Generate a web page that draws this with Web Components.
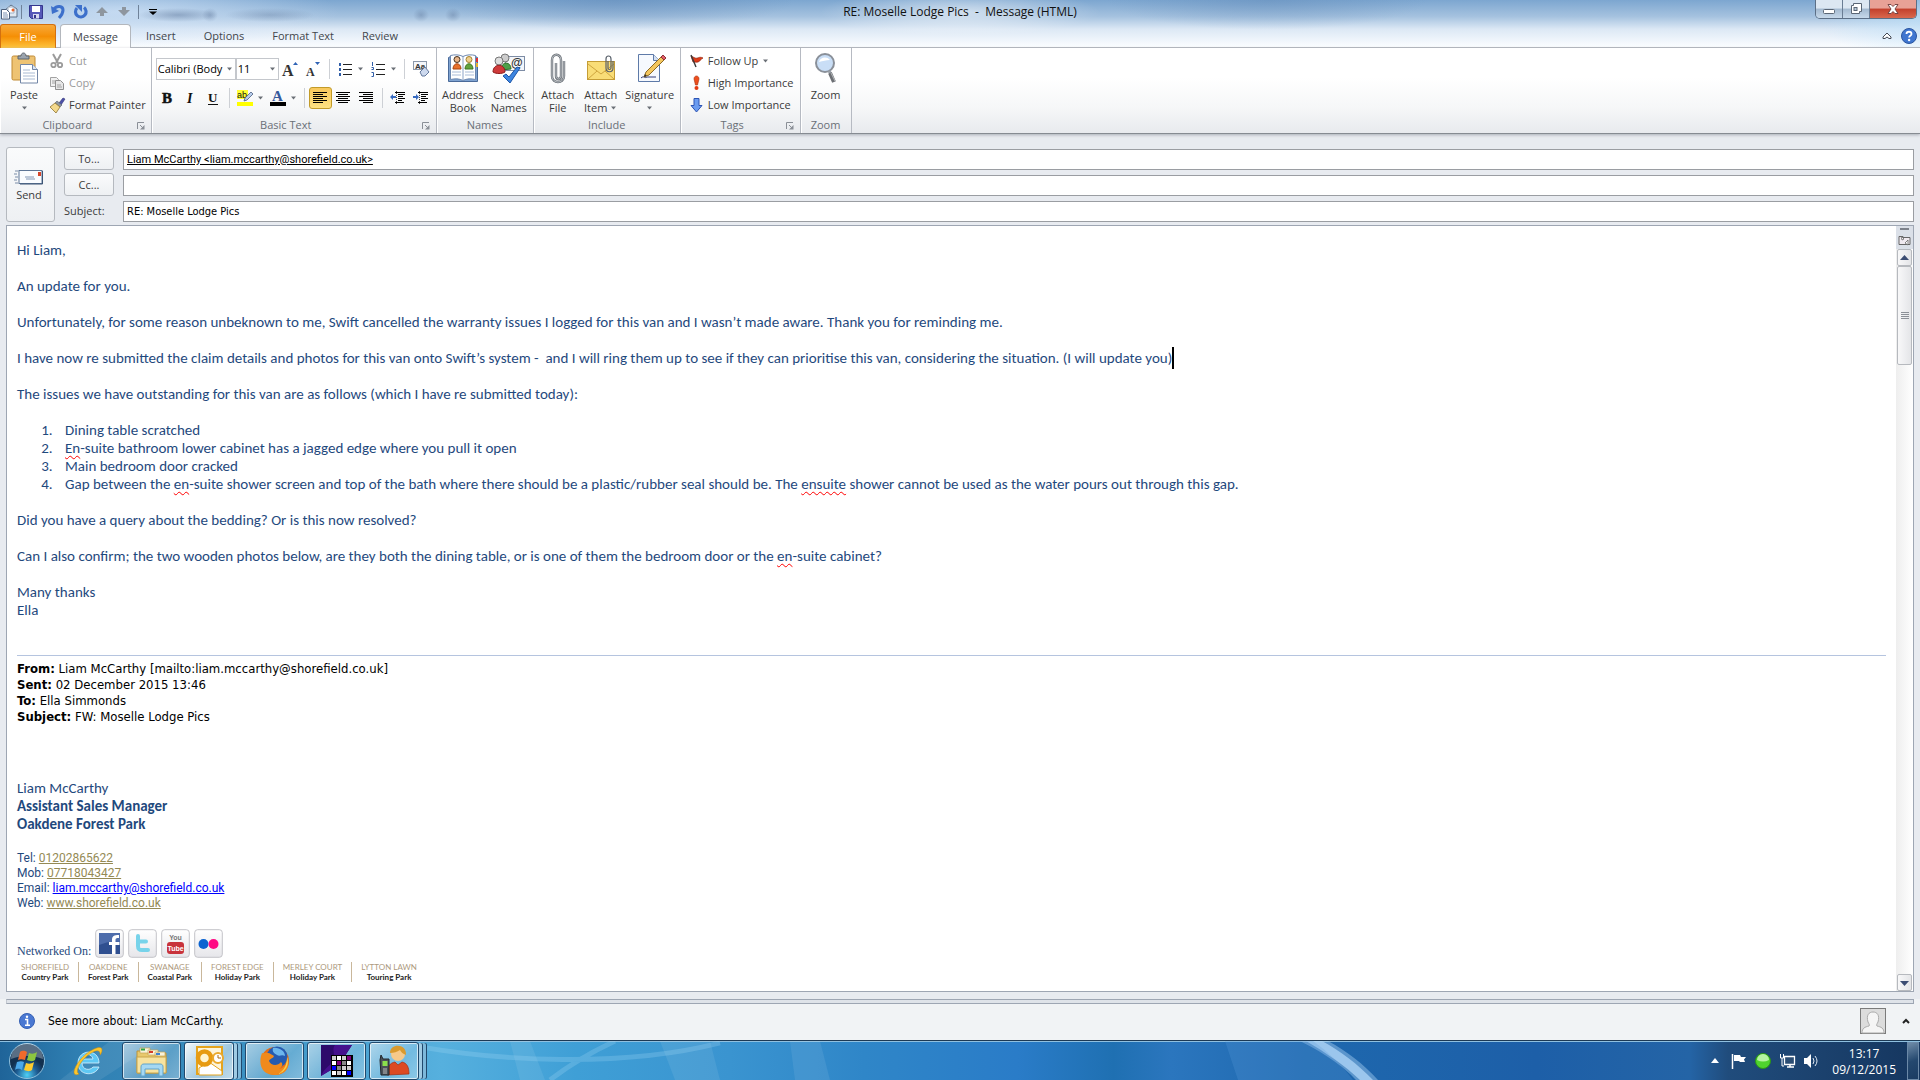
<!DOCTYPE html>
<html lang="en">
<head>
<meta charset="utf-8">
<title>RE: Moselle Lodge Pics - Message (HTML)</title>
<style>
    body {
        margin: 0;
        min-height: 100vh;
        display: flex;
        flex-direction: column;
        background: #e8ebf0;
        font: 11px/14px "Open Sans", "Noto Sans", sans-serif;
        color: #3b3b3b;
    }
    .ribbon {
        display: flex;
        height: 85px;
        border-bottom: 1px solid #868b92;
        background: linear-gradient(#fff 35%, #f6f7f8 70%, #e8eaee);
        box-shadow: 0 1px 3px #a9aeb6;
    }
    .stack { display: flex; flex-direction: column; }
    .line { display: flex; align-items: center; height: 29px; }
    message-editor { flex: 1; }

    /* message text */
    .mail { font: 15px/18px Carlito, Lato, sans-serif; color: #1f497d; }
    .mail p { margin: 0 0 18px; }
    .mail ol { margin: 0 0 18px; padding-left: 39px; }
    .mail li { padding-left: 9px; }
    .typo { text-decoration: underline wavy #f00 1px; text-underline-offset: 2px; }
    .caret { border-left: 2px solid #000; padding: 2px 0; }
    .quoted {
        margin-top: 36px;
        border-top: 1px solid #b5c4df;
        padding-top: 5px;
        font: 13px/16px "DejaVu Sans Condensed", sans-serif;
        color: #000;
    }
    .sign { margin-top: 54px; }
    .contact { margin-top: 18px; font: 12px/15px Roboto, sans-serif; }
    .contact a { color: #948a54; }
    .contact a.mailto { color: #00f; }
    .social { display: flex; align-items: flex-end; gap: 4px; margin-top: 18px; font: 12px/14px "Liberation Serif", serif; }
</style>
</head>
<body>

<window-header title="RE: Moselle Lodge Pics &nbsp;-&nbsp; Message (HTML)"></window-header>

<div class="ribbon">
    <ribbon-group label="Clipboard" launcher>
        <large-button icon="paste" text="Paste" arrow style="--w:44px"></large-button>
        <div class="stack">
            <small-button icon="cut" text="Cut" disabled></small-button>
            <small-button icon="copy" text="Copy" disabled></small-button>
            <small-button icon="brush" text="Format Painter"></small-button>
        </div>
    </ribbon-group>
    <ribbon-group label="Basic Text" launcher>
        <div class="stack" style="padding:4px 1px 0 2px">
            <div class="line">
                <combo-box label="Font" value="Calibri (Body" style="--w:80px"></combo-box>
                <combo-box label="Font size" value="11" style="--w:43px"></combo-box>
                <tool-button icon="grow" label="Grow font"></tool-button>
                <tool-button icon="shrink" label="Shrink font"></tool-button>
                <tool-separator></tool-separator>
                <tool-button icon="bullets" label="Bullets" arrow></tool-button>
                <tool-button icon="numbers" label="Numbering" arrow></tool-button>
                <tool-separator></tool-separator>
                <tool-button icon="clear" label="Clear formatting"></tool-button>
            </div>
            <div class="line">
                <tool-button icon="bold" label="Bold"></tool-button>
                <tool-button icon="italic" label="Italic"></tool-button>
                <tool-button icon="underline" label="Underline"></tool-button>
                <tool-separator></tool-separator>
                <tool-button icon="highlight" label="Highlight" arrow></tool-button>
                <tool-button icon="fontcolor" label="Font colour" arrow></tool-button>
                <tool-separator></tool-separator>
                <tool-button icon="left" label="Align left" pressed></tool-button>
                <tool-button icon="center" label="Centre"></tool-button>
                <tool-button icon="right" label="Align right"></tool-button>
                <tool-separator></tool-separator>
                <tool-button icon="outdent" label="Decrease indent"></tool-button>
                <tool-button icon="indent" label="Increase indent"></tool-button>
            </div>
        </div>
    </ribbon-group>
    <ribbon-group label="Names">
        <large-button icon="book" text="Address" more="Book" style="--w:48px"></large-button>
        <large-button icon="check" text="Check" more="Names" style="--w:44px"></large-button>
    </ribbon-group>
    <ribbon-group label="Include">
        <large-button icon="clip" text="Attach" more="File" style="--w:44px"></large-button>
        <large-button icon="item" text="Attach" more="Item" arrow style="--w:42px"></large-button>
        <large-button icon="signature" text="Signature" arrow style="--w:56px"></large-button>
    </ribbon-group>
    <ribbon-group label="Tags" launcher>
        <div class="stack" style="padding:0 1px 0 2px">
            <small-button icon="flag" text="Follow Up" arrow></small-button>
            <small-button icon="high" text="High Importance"></small-button>
            <small-button icon="low" text="Low Importance"></small-button>
        </div>
    </ribbon-group>
    <ribbon-group label="Zoom">
        <large-button icon="zoom" text="Zoom" style="--w:46px"></large-button>
    </ribbon-group>
</div>

<address-form to="Liam McCarthy &lt;liam.mccarthy@shorefield.co.uk&gt;" subject="RE: Moselle Lodge Pics"></address-form>

<message-editor>
    <div class="mail">
        <p>Hi Liam,</p>
        <p>An update for you.</p>
        <p>Unfortunately, for some reason unbeknown to me, Swift cancelled the warranty issues I logged for this van and I wasn’t made aware. Thank you for reminding me.</p>
        <p>I have now re submitted the claim details and photos for this van onto Swift’s system -&nbsp; and I will ring them up to see if they can prioritise this van, considering the situation. (I will update you)<span class="caret"></span></p>
        <p>The issues we have outstanding for this van are as follows (which I have re submitted today):</p>
        <ol>
            <li>Dining table scratched</li>
            <li><span class="typo">En</span>-suite bathroom lower cabinet has a jagged edge where you pull it open</li>
            <li>Main bedroom door cracked</li>
            <li>Gap between the <span class="typo">en</span>-suite shower screen and top of the bath where there should be a plastic/rubber seal should be. The <span class="typo">ensuite</span> shower cannot be used as the water pours out through this gap.</li>
        </ol>
        <p>Did you have a query about the bedding? Or is this now resolved?</p>
        <p>Can I also confirm; the two wooden photos below, are they both the dining table, or is one of them the bedroom door or the <span class="typo">en</span>-suite cabinet?</p>
        <div>Many thanks<br>Ella</div>
        <div class="quoted">
            <b>From:</b> Liam McCarthy [mailto:liam.mccarthy@shorefield.co.uk]<br>
            <b>Sent:</b> 02 December 2015 13:46<br>
            <b>To:</b> Ella Simmonds<br>
            <b>Subject:</b> FW: Moselle Lodge Pics
        </div>
        <div class="sign">Liam McCarthy<br><b>Assistant Sales Manager<br>Oakdene Forest Park</b></div>
        <div class="contact">
            Tel: <a href="tel:01202865622">01202865622</a><br>
            Mob: <a href="tel:07718043427">07718043427</a><br>
            Email: <a class="mailto" href="mailto:liam.mccarthy@shorefield.co.uk">liam.mccarthy@shorefield.co.uk</a><br>
            Web: <a href="#web">www.shorefield.co.uk</a>
        </div>
        <div class="social">
            <span>Networked On:</span>
            <ol-icon name="facebook" size="29"></ol-icon>
            <ol-icon name="twitter" size="29"></ol-icon>
            <ol-icon name="youtube" size="29"></ol-icon>
            <ol-icon name="flickr" size="29"></ol-icon>
        </div>
        <park-strip></park-strip>
    </div>
</message-editor>

<people-pane>See more about: Liam McCarthy.</people-pane>
<task-bar time="13:17" date="09/12/2015"></task-bar>

<script>
const lines = (rows, x = 0) => rows.map(([a, b], i) => `<path d="M${x + a} ${2.5 + i * 2}H${x + b}" stroke="#000"/>`).join('');
const tile = '<defs><linearGradient id="t" x2="0" y2="1"><stop stop-color="#fff"/><stop offset="1" stop-color="#e6e6ea"/></linearGradient></defs><rect x=".7" y=".7" width="27.6" height="27.6" rx="3" fill="url(#t)" stroke="#c3c3c8"/>';

// name: [viewBox width, viewBox height, markup]
const ICONS = {
    caret: [7, 4, '<path d="M1 .5h5L3.500 3.500z" fill="#6a6f76"/>'],
    launch: [8, 8, '<path d="M.5 7V.5H7M3 3l3 3" fill="none" stroke="#8a8f97"/><path d="M7.500 3v4.500H3z" fill="#8a8f97"/>'],
    app: [18, 16, '<path d="M5 6l6-5 6 4v8H5z" fill="#dfe8f2" stroke="#5f7187"/><path d="M8 3h6v6H8z" fill="#fff" stroke="#9fb0c4"/><circle cx="13" cy="6" r="1.500" fill="#e8642c"/><path d="M1.500 5.500h5l3 3V15h-8z" fill="#fff" stroke="#4c5f7a"/><path d="M3 9h4M3 11h5M3 13h5" stroke="#7c93b3"/>'],
    save: [16, 16, '<path d="M1.500 1.500h13v13h-11l-2-2z" fill="#5658b8" stroke="#34368c"/><path d="M4 2h8v6H4z" fill="#fff"/><path d="M5 10h6v4.500H5z" fill="#d7daf0"/><path d="M6 11h2v3H6z" fill="#34368c"/>'],
    undo: [16, 16, '<path d="M4 5c3-4 9-3 9 1 0 3-1 5-4 8" fill="none" stroke="#3d70cb" stroke-width="3"/><path d="M1 2l1 8 7-3z" fill="#3d70cb"/>'],
    redo: [16, 16, '<path d="M12 3.500A5.300 5.300 0 1 1 5 4" fill="none" stroke="#3d70cb" stroke-width="3.200"/><path d="M3 1h7v7z" fill="#3d70cb"/>'],
    up: [12, 10, '<path d="M6 0l6 6H8v3H4V6H0z" fill="#8e969f"/>'],
    down: [12, 10, '<path d="M6 9l6-6H8V0H4v3H0z" fill="#8e969f"/>'],
    qat: [8, 6, '<path d="M0 .5h8" stroke="#000"/><path d="M0 2.500h8L4 6z" fill="#000"/>'],
    min: [14, 14, '<rect x="1.500" y="7.500" width="11" height="4" rx="1" fill="#fff" stroke="#5a6675"/>'],
    max: [14, 14, '<path d="M4.500 1.500h8v8h-2v2h-8v-8h2z" fill="#fff" stroke="#5a6675"/><rect x="5" y="5.500" width="3" height="3" fill="#b9cbdc" stroke="#5a6675"/>'],
    close: [14, 14, '<path d="M2 2.500h3l2 2 2-2h3L9 7l3 4.500H9l-2-2-2 2H2L5 7z" fill="#fff" stroke="#6b3a3a" stroke-width=".9"/>'],
    collapse: [10, 8, '<path d="M1 5l4-4 4 4v1.500H7L5 5 3 6.500H1z" fill="#fff" stroke="#444a55"/>'],
    help: [16, 16, '<circle cx="8" cy="8" r="7.500" fill="#3f76d0" stroke="#2a559f"/><path d="M5.500 6C5.500 3 10.500 3 10.500 6c0 1.800-2.400 1.800-2.400 3.600" fill="none" stroke="#fff" stroke-width="1.800"/><circle cx="8.100" cy="12" r="1.200" fill="#fff"/>'],
    paste: [32, 32, '<rect x="4" y="4" width="23" height="24" rx="1.500" fill="#eec373" stroke="#c08a35"/><path d="M10 7V4h3c0-4 5-4 5 0h3v3z" fill="#9aa3ad" stroke="#5d646d"/><path d="M12.500 12.500h12l5 5v13.500h-17z" fill="#fff" stroke="#7286a6"/><path d="M24.500 12.500v5h5" fill="#dbe5f2" stroke="#7286a6"/><path d="M15 18h7M15 21h12M15 24h12M15 27h12" stroke="#a9bad2"/>'],
    cut: [16, 16, '<path d="M4 1l5 9M12 1L7 10" stroke="#9b9b9b" stroke-width="2"/><circle cx="4.500" cy="12" r="2.200" fill="none" stroke="#9b9b9b" stroke-width="1.800"/><circle cx="11" cy="12" r="2.200" fill="none" stroke="#9b9b9b" stroke-width="1.800"/>'],
    copy: [16, 16, '<path d="M1.500 2.500h6l2 2v7h-8z" fill="#f1f1f1" stroke="#a2a2a2"/><path d="M6.500 5.500h5l3 3v6h-8z" fill="#e6e6e6" stroke="#8f8f8f"/><path d="M3 6h3M3 8h3M8 10h4M8 12h5" stroke="#a2a2a2"/>'],
    brush: [16, 16, '<path d="M10 6l4-5 2 1-4 6z" fill="#4c50a8" stroke="#2c2f75" stroke-width=".6"/><path d="M8 4l5 4-2 2-5-4z" fill="#8c96a3" stroke="#565e69" stroke-width=".6"/><path d="M6 6l5 4-4 6-6-6z" fill="#f3d98c" stroke="#8e7331" stroke-width=".8"/>'],
    grow: [16, 16, '<text x="0" y="15" font-family="Liberation Serif,serif" font-weight="bold" font-size="16" fill="#333">A</text><path d="M11 4l2.500-3L16 4z" fill="#2f63b5"/>'],
    shrink: [16, 16, '<text x="1" y="15" font-family="Liberation Serif,serif" font-weight="bold" font-size="12" fill="#333">A</text><path d="M10 1h5l-2.500 3z" fill="#2f63b5"/>'],
    bullets: [16, 16, '<path d="M2 3.500h2M2 8.500h2M2 13.500h2" stroke="#2f5da8" stroke-width="3"/><path d="M6 3.500h9M6 8.500h9M6 13.500h9" stroke="#222"/>'],
    numbers: [16, 16, '<path d="M2.500 1v4M1.500 6.500h2v2h-2M1.500 11.500h2v4h-2" fill="none" stroke="#2f5da8"/><path d="M6 3.500h9M6 8.500h9M6 13.500h9" stroke="#222"/>'],
    clear: [18, 18, '<rect x="1.500" y="1.500" width="13" height="8" fill="#f5f7fa" stroke="#8b98aa"/><text x="3" y="9" font-family="Liberation Sans,sans-serif" font-weight="bold" font-size="8" fill="#333">Aa</text><path d="M8 12l5-5 4 5-4 4h-3z" fill="#cdd9ee" stroke="#63789c"/>'],
    bold: [16, 16, '<text x="3" y="13" font-family="Liberation Serif,serif" font-weight="bold" font-size="15" stroke="#111" stroke-width=".5" fill="#111">B</text>'],
    italic: [16, 16, '<text x="5" y="13" font-family="Liberation Serif,serif" font-style="italic" font-weight="bold" font-size="14" fill="#111">I</text>'],
    underline: [16, 16, '<text x="3" y="12" font-family="Liberation Serif,serif" font-weight="bold" font-size="13" fill="#111">U</text><path d="M3 14.500h10" stroke="#111"/>'],
    highlight: [16, 16, '<rect y="0" width="11" height="9" fill="#ff3"/><text x="0" y="8" font-family="Liberation Sans,sans-serif" font-size="9" fill="#111">ab</text><path d="M8 8l6-6 2 2-6 6-3 1z" fill="#b9cdec" stroke="#4a5e80" stroke-width=".8"/><rect y="12" width="16" height="4" fill="#ff0"/>'],
    fontcolor: [16, 16, '<text x="2" y="11" font-family="Liberation Serif,serif" font-weight="bold" font-size="15" fill="#35599c">A</text><rect y="12" width="16" height="4" fill="#000"/>'],
    left: [16, 16, lines([[1, 15], [1, 11], [1, 15], [1, 11], [1, 15], [1, 11]])],
    center: [16, 16, lines([[1, 15], [3, 13], [1, 15], [3, 13], [1, 15], [3, 13]])],
    right: [16, 16, lines([[1, 15], [5, 15], [1, 15], [5, 15], [1, 15], [5, 15]])],
    outdent: [16, 16, lines([[5, 15], [8, 15], [8, 13], [8, 15], [8, 12], [5, 14]]) + '<path d="M6.500 1v14" stroke="#444" stroke-dasharray="1 1"/><path d="M0 7l3-3v2h3v2H3v2z" fill="#3569c0"/>'],
    indent: [16, 16, lines([[5, 15], [8, 15], [8, 13], [8, 15], [8, 12], [5, 14]]) + '<path d="M6.500 1v14" stroke="#444" stroke-dasharray="1 1"/><path d="M6 7L3 4v2H0v2h3v2z" fill="#3569c0"/>'],
    book: [32, 32, '<path d="M1.500 5.500l2-1h25l2 1v24h-29z" fill="#7fa3d1" stroke="#4a6a99"/><path d="M3.500 3.500c4-1 9-1 12.500 1 3.500-2 8.500-2 12.500-1v24c-4-1-9-1-12.500 1-3.500-2-8.500-2-12.500-1z" fill="#fff" stroke="#6d88b0"/><path d="M16 4.500v24" stroke="#8ba3c7"/><path d="M5 20h9M5 23h9M18 20h9M18 23h9" stroke="#a9bcd8"/><circle cx="10" cy="7.500" r="3" fill="#e8b58a" stroke="#44301f"/><path d="M6 17c0-7 8-7 8 0z" fill="#e8702a" stroke="#a8450f"/><circle cx="22" cy="7.500" r="3" fill="#f0cf8e" stroke="#a5822d"/><path d="M18 17c0-7 8-7 8 0z" fill="#64a33d" stroke="#3d7420"/><path d="M30 6v4" stroke="#d33" stroke-width="2"/><path d="M30 11v4" stroke="#e9b52c" stroke-width="2"/>'],
    check: [34, 32, '<rect x="13.500" y="4.500" width="19" height="14" fill="#f4f6fa" stroke="#7d8ca5"/><circle cx="13" cy="6" r="4" fill="#ccc" stroke="#777"/><path d="M9 18c0-9 10-9 10-1z" fill="#4da04a" stroke="#2c6e2a"/><circle cx="7" cy="9" r="4" fill="#ddd" stroke="#777"/><path d="M1 20c0-9 12-9 12 0-3 2-9 2-12 0z" fill="#cf3a3a" stroke="#8e1e1e"/><text x="19" y="15" font-family="Liberation Sans,sans-serif" font-weight="bold" font-size="12" fill="#333">@</text><path d="M11 24l3-2 3 3 8-10 3 1-10 15z" fill="#3d85e0" stroke="#1c55a8"/>'],
    clip: [32, 32, '<path d="M14 11v13c0 4 5 4 5 0V8c0-7-9-7-9 0v16c0 8 12 8 12 0V9" fill="none" stroke="#666c73" stroke-width="2.400"/><path d="M14 11v13c0 4 5 4 5 0V8c0-7-9-7-9 0v16c0 8 12 8 12 0V9" fill="none" stroke="#d8dcdf" stroke-width=".8"/>'],
    item: [32, 32, '<rect x="2.500" y="9.500" width="27" height="18" fill="#f9dd77" stroke="#c59d36"/><path d="M3 12l13 10 13-10M3 27l9-8M29 27l-9-8" fill="none" stroke="#cfa53e"/><path d="M23 9v7c0 2 3 2 3 0V7c0-4-5-4-5 0v9c0 5 7 5 7 0V9" fill="none" stroke="#59616b" stroke-width="1.200"/>'],
    signature: [32, 32, '<path d="M4.500 2.500h15l6 6v21h-21z" fill="#f6f9fe" stroke="#5e7aa8"/><path d="M19.500 2.500v6h6" fill="#d4e0f2" stroke="#5e7aa8"/><path d="M7 26c3-3 4 1 6-1h9" fill="none" stroke="#333c7a"/><path d="M10 25l2-5L27 5l3 3-15 15z" fill="#f4c65d" stroke="#8c6a24"/><path d="M27 5l2-2 3 3-2 2z" fill="#e0606a" stroke="#903038"/><path d="M10 25l1-3 2 2z" fill="#333"/>'],
    flag: [16, 16, '<path d="M3 3l4 2c3 1 4-2 8 0-3 1-2 3-5 4-2 .5-3 0-5 0z" fill="#e03a17" stroke="#8e1e08" stroke-width=".7"/><path d="M3 2l5 12" stroke="#3a3a3a" stroke-width="1.400"/>'],
    high: [16, 16, '<path d="M6 4c0-4 5-4 5 0L9.500 10h-2z" fill="#ee4f1e" stroke="#a62b08" stroke-width=".6"/><circle cx="8.500" cy="13" r="2" fill="#e33a12"/>'],
    low: [16, 16, '<path d="M6 1.500h5v7h3L8.500 15 3 8.500h3z" fill="#6c9cf0" stroke="#2c54b5"/>'],
    zoom: [32, 32, '<circle cx="15" cy="11" r="9" fill="#c9def6" stroke="#8a9099" stroke-width="2"/><path d="M9 10c1-5 8-6 11-2-4 0-7 1-11 2z" fill="#fff"/><path d="M19 19l2 3" stroke="#9aa0a8" stroke-width="3"/><path d="M20 21l4 9" stroke="#6c6f74" stroke-width="4"/><path d="M21 21l4 8" stroke="#b7babd" stroke-width="1"/>'],
    send: [30, 16, '<path d="M1 2h3M0 5h3M1 8h3M0 11h3M1 14h3" stroke="#7a8da8"/><rect x="5" y="1.500" width="23" height="13" fill="#fafcff" stroke="#5d7596"/><path d="M28.500 2v13H6" fill="none" stroke="#3c5474"/><path d="M11 8h9M12 10h9" stroke="#8196b5"/><rect x="24" y="3" width="3" height="4" fill="#d6452a"/>'],
    page: [13, 12, '<path d="M1 2.500h4v1h7v7H1z" fill="#f0eaf0" stroke="#666"/><path d="M3 2l3 3-2 1zM7 9l3-3v5z" fill="#fff" stroke="#666" stroke-width=".8"/>'],
    arrowup: [9, 6, '<path d="M0 5l4.500-5L9 5z" fill="#3c4d73"/>'],
    arrowdown: [9, 6, '<path d="M0 1l4.500 5L9 1z" fill="#3c4d73"/>'],
    info: [16, 16, '<circle cx="8" cy="8" r="7.500" fill="#4a78d2" stroke="#3560b4"/><path d="M6 6.500h2.500V12M6 12.200h5" fill="none" stroke="#fff" stroke-width="1.600"/><circle cx="8" cy="3.800" r="1.200" fill="#fff"/>'],
    person: [26, 26, '<rect x=".5" y=".5" width="25" height="25" fill="#dcdcdc" stroke="#7b7b7b"/><path d="M2 25c0-5 3-6 7-7 1-1 0-2-1-4-2-7 1-10 5-10s7 3 5 10c-1 2-2 3-1 4 4 1 7 2 7 7z" fill="#f5f5f5" stroke="#aaa"/>'],
    chevron: [8, 6, '<path d="M1 5l3-3 3 3" fill="none" stroke="#222" stroke-width="2"/>'],
    facebook: [29, 29, tile + '<path d="M4 4h21v21H4z" fill="#2f4f90"/><path d="M4 4h21v9c-8-1-14 0-21 3z" fill="#4d6cab"/><path d="M17 25V16h-3v-3h3v-2c0-4 2-5 7-5v3c-3 0-3.500.5-3.500 2v2h4v3h-4v9z" fill="#fff"/>'],
    twitter: [29, 29, tile + '<path d="M10 7v10c0 3 1 4 4 4h6" fill="none" stroke="#77d3ea" stroke-width="4" stroke-linecap="round"/><path d="M10 12.500h8" stroke="#77d3ea" stroke-width="4" stroke-linecap="round"/>'],
    youtube: [29, 29, tile + '<text x="14.500" y="11" text-anchor="middle" font-family="Liberation Sans Narrow,Liberation Sans,sans-serif" font-weight="bold" font-size="7" fill="#777">You</text><rect x="6" y="13" width="17" height="12" rx="3" fill="#c8333b"/><text x="14.500" y="22" text-anchor="middle" font-family="Liberation Sans Narrow,Liberation Sans,sans-serif" font-weight="bold" font-size="7" fill="#fff">Tube</text>'],
    flickr: [29, 29, tile + '<circle cx="9.500" cy="15" r="5" fill="#0a63d0"/><circle cx="19.500" cy="15" r="5" fill="#ff0a84"/>'],
    start: [38, 38, '<defs><radialGradient id="g" cy=".9"><stop stop-color="#4fd0f5"/><stop offset=".6" stop-color="#1d5c93"/><stop offset="1" stop-color="#12304f"/></radialGradient></defs><circle cx="19" cy="19" r="17.500" fill="url(#g)" stroke="#8fc0dd"/><path d="M3 17a16 16 0 0 1 32 0c-10-4-22-4-32 0z" fill="#fff" opacity=".3"/><path d="M12 10c3-2 5-1 7 0l-2 8c-3-1-5-1-7 0z" fill="#ef6a2c"/><path d="M21 11c3 1 5 1 8-1l-2 8c-3 2-5 1-8 0z" fill="#8cc63f"/><path d="M9 20c3-1 5-1 7 0l-2 8c-2-1-4-2-7 0z" fill="#4aa8ea"/><path d="M18 21c3 1 5 1 8-1l-2 8c-3 2-5 1-8 0z" fill="#fdcb2e"/>'],
    ie: [32, 32, '<path d="M27 18H10c0 7 8 8 11 4h6c-4 10-21 9-21-4C6 4 27 3 27 18zM10 14h11c-1-6-10-6-11 0z" fill="#5fc8f4" stroke="#d9f3ff" stroke-width=".8"/><path d="M7 29C-2 33 2 19 14 9 22 3 30 0 30 5c0 2-1 4-2 5 1-8-9-3-14 2C7 18 3 27 7 29z" fill="#fcc52d" stroke="#c98d0c" stroke-width=".5"/>'],
    explorer: [34, 32, '<path d="M2 6h9l2 2h18v20H2z" fill="#e8c96d" stroke="#b9933a"/><path d="M5 3h10v5H5zM13 5h10v5H13zM20 7h10v4H20z" fill="#f9f3da" stroke="#c5a553" stroke-width=".7"/><path d="M6 4.500h4" stroke="#2ea043" stroke-width="2"/><path d="M14 7h4" stroke="#d33a2a" stroke-width="2"/><path d="M21 9h4" stroke="#3b83d6" stroke-width="2"/><path d="M2 12h29v16H2z" fill="#f7e3a0" stroke="#caa54b"/><path d="M6 31V22c0-2 1-3 3-3h16c2 0 3 1 3 3v9h-4v-7H10v7z" fill="#a5d8f3" stroke="#5ea3cc"/>'],
    outlook: [32, 32, '<path d="M4 2h25v27H4z" fill="#fdf4d9" stroke="#e5a31c" stroke-width="2"/><path d="M6 23l10-6 13 9v4H6z" fill="#fff" stroke="#e5a31c"/><circle cx="11.500" cy="13" r="6.500" fill="#fff4cf" stroke="#e79b12" stroke-width="4.500"/><circle cx="25" cy="13" r="5" fill="#fff" stroke="#eaa92c" stroke-width="2"/><path d="M25 10v3h3" fill="none" stroke="#a86b10"/>'],
    firefox: [32, 32, '<circle cx="16" cy="16" r="14" fill="#e66d17"/><circle cx="18" cy="12" r="10.500" fill="#255bb0"/><path d="M14 3c6-1 12 3 12 8-4-2-5 1-8-1s-5-3-4-7z" fill="#6cb6ec"/><path d="M3 8c2 1 3-1 6 0 2 0 4 2 6 3-1 3-4 2-5 5 2 5 9 5 12 1 2 2 2 4-2 7 6-1 9-6 8-12 4 8 0 18-12 18C2 30-1 18 3 8z" fill="#f08a1d"/><path d="M28 12c3 8-2 15-9 17 7-4 9-10 9-17z" fill="#fbd24a"/>'],
    grid: [34, 34, '<path d="M1 1h31L20 20 1 32z" fill="#2d0a6b"/><path d="M32 1L18 22 1 32c3-8 12-13 13-15 2-5-3-12 1-16z" fill="#45108d"/><rect x="11" y="11" width="22" height="22" fill="#000"/>' +
        ['#ccc', '#fff', '#ccc', '#80007e', '#fff', '#80007e', '#888', '#fff', '#00f', '#888', '#ccc', '#ccc', '#fff', '#ccc', '#fff', '#00f'].map((c, i) => `<rect x="${12 + i % 4 * 5}" y="${12 + (i >> 2) * 5}" width="4" height="4" fill="${c}"/>`).join('')],
    messenger: [32, 32, '<circle cx="20" cy="9" r="7" fill="#f6c98a"/><path d="M12 8c0-10 17-10 16 2-3-1-5-3-6-5-3 2-6 3-10 3z" fill="#d99a2e"/><path d="M9 30c0-9 3-12 8-13l3 3 4-3c5 1 7 5 7 12z" fill="#dd4a23" stroke="#a32d10" stroke-width=".7"/><path d="M2 15l1-5 2 4h6v16H3z" fill="#4a5058" stroke="#22262b"/><rect x="4.500" y="16" width="5" height="5" fill="#8be04c"/><path d="M5 24h4M5 26h4M5 28h4" stroke="#bbb"/>'],
    tray: [8, 5, '<path d="M0 5l4-5 4 5z" fill="#fff"/>'],
    trayflag: [16, 16, '<path d="M1.500 1v15" stroke="#fff" stroke-width="1.500"/><path d="M3 2h6l1 2h5l-2 2.500 1 2.500H9L8 8H3z" fill="#fff"/>'],
    status: [16, 16, '<circle cx="8" cy="8" r="7.500" fill="#4fd32e" stroke="#2c9514"/><path d="M2 7a6 6 0 0 1 12 0c-4 2-8 2-12 0z" fill="#b7f3a2"/>'],
    network: [16, 16, '<path d="M5.500 3.500h10v8h-10z" fill="#2b4d73" stroke="#fff" stroke-width="1.300"/><path d="M8 14h7M11 12v2" stroke="#fff" stroke-width="1.500"/><path d="M1.500 1v4h3V1M3 5v8h2" fill="none" stroke="#fff"/>'],
    sound: [16, 16, '<path d="M1 5h3l4-4v14l-4-4H1z" fill="#fff"/><path d="M10 5q2 3 0 6M12 3q4 5 0 10" fill="none" stroke="#dfe8f2"/>']
};

const BUTTON = 'button { font: inherit; color: inherit; margin: 0; padding: 0; border: 0; background: none; }';

class OlIcon extends HTMLElement {
    constructor() {
        super();
        this.attachShadow({ mode: 'open' });
    }

    connectedCallback() {
        const [w, h, art] = ICONS[this.getAttribute('name')];
        const width = this.getAttribute('size') || w;
        this.shadowRoot.innerHTML = `
            <style>:host { display: inline-flex; flex: none; } svg { display: block; overflow: visible; }</style>
            <svg width="${width}" height="${width * h / w}" viewBox="0 0 ${w} ${h}" aria-hidden="true">${art}</svg>
        `;
    }
}

class WindowHeader extends HTMLElement {
    constructor() {
        super();
        this.attachShadow({ mode: 'open' });
    }

    connectedCallback() {
        const quick = ['save', 'undo', 'redo', 'up', 'down'];
        const tabs = ['Insert', 'Options', 'Format Text', 'Review'];
        this.shadowRoot.innerHTML = `
            <style>
                ${BUTTON}
                :host {
                    display: block;
                    height: 48px;
                    box-sizing: border-box;
                    border-bottom: 1px solid #b3b7bd;
                    background:
                        radial-gradient(40px 7px at 178px 15px, #5b749877, transparent),
                        radial-gradient(8px 7px at 210px 15px, #5b749866, transparent),
                        radial-gradient(45px 7px at 270px 15px, #5b749855, transparent),
                        radial-gradient(8px 7px at 421px 15px, #5b749866, transparent),
                        radial-gradient(8px 7px at 453px 15px, #5b749866, transparent),
                        radial-gradient(220px 36px at 120px 12px, #cfe2f7cc, transparent),
                        radial-gradient(180px 30px at 32% 0, #5d86b577, transparent),
                        radial-gradient(160px 30px at 66% 0, #5d86b566, transparent),
                        radial-gradient(140px 24px at 50% 12px, #ffffff88, transparent),
                        radial-gradient(100px 40px at 100% 40%, #bfe2faaa, transparent),
                        linear-gradient(#7ca6d0, #a5c2df 35%, #dce8f5 62%, #fbfdff);
                }
                .bar { display: grid; grid-template-columns: 1fr auto 1fr; height: 24px; }
                .quick { display: flex; align-items: center; height: 23px; }
                .quick button { width: 22px; height: 20px; display: grid; place-items: center; }
                .sep { width: 1px; height: 14px; background: #6f8299; margin: 0 3px; }
                .title { font-size: 12px; line-height: 23px; color: #111; white-space: nowrap; }
                .win { justify-self: end; display: flex; height: 18px; margin-right: 3px; border: 1px solid #5c6f86; border-top: 0; border-radius: 0 0 5px 5px; overflow: hidden; }
                .win button { width: 27px; display: grid; place-items: center; border-right: 1px solid #6a7d94; background: linear-gradient(#dce7f2 45%, #a3b9d0 50%, #c7d9ea); }
                .win button:last-child { width: 46px; border: 0; background: linear-gradient(#e8a196 45%, #c3402c 50%, #d9684e); }
                nav { display: flex; height: 24px; color: #42464c; }
                nav button { padding: 0 14px; }
                nav .file { width: 56px; padding: 0; color: #fff; border: 1px solid #d3700f; border-bottom: 0; border-radius: 3px 3px 0 0; background: linear-gradient(#f8a93a, #f58f05 50%, #ffc53d); }
                nav .on { width: 71px; padding: 0; margin: 0 1px 0 4px; border: 1px solid #b3b7bd; border-bottom: 0; border-radius: 4px 4px 0 0; background: #fff; }
                .side { margin-left: auto; display: flex; align-items: center; gap: 9px; padding-right: 3px; }
                nav .side button { padding: 0; display: flex; }
            </style>
            <div class="bar">
                <div class="quick">
                    <ol-icon name="app"></ol-icon><span class="sep"></span>
                    ${quick.map(n => `<button aria-label="${n}"><ol-icon name="${n}"></ol-icon></button>`).join('')}
                    <span class="sep"></span><button aria-label="customise"><ol-icon name="qat"></ol-icon></button>
                </div>
                <div class="title">${this.getAttribute('title')}</div>
                <div class="win">
                    <button aria-label="Minimise"><ol-icon name="min"></ol-icon></button>
                    <button aria-label="Restore"><ol-icon name="max"></ol-icon></button>
                    <button aria-label="Close"><ol-icon name="close"></ol-icon></button>
                </div>
            </div>
            <nav>
                <button class="file">File</button>
                <button class="on">Message</button>
                ${tabs.map(t => `<button>${t}</button>`).join('')}
                <div class="side">
                    <button aria-label="Collapse"><ol-icon name="collapse"></ol-icon></button>
                    <button aria-label="Help"><ol-icon name="help"></ol-icon></button>
                </div>
            </nav>
        `;
    }
}

class RibbonGroup extends HTMLElement {
    constructor() {
        super();
        this.attachShadow({ mode: 'open' });
    }

    connectedCallback() {
        this.shadowRoot.innerHTML = `
            <style>
                ${BUTTON}
                :host { display: flex; flex-direction: column; padding: 2px 2px 0; border-right: 1px solid #b6bac2; box-shadow: inset 1px 0 #fff; }
                .items { display: flex; height: 67px; }
                .foot { display: flex; align-items: center; height: 16px; color: #6a6f77; }
                .foot span { flex: 1; text-align: center; }
                .foot button { display: flex; padding: 2px 4px 0; }
            </style>
            <div class="items"><slot></slot></div>
            <div class="foot">
                <span>${this.getAttribute('label')}</span>
                ${this.hasAttribute('launcher') ? '<button aria-label="More"><ol-icon name="launch"></ol-icon></button>' : ''}
            </div>
        `;
    }
}

class LargeButton extends HTMLElement {
    constructor() {
        super();
        this.attachShadow({ mode: 'open' });
    }

    connectedCallback() {
        const more = this.getAttribute('more') || '';
        const arrow = this.hasAttribute('arrow') ? '<ol-icon name="caret"></ol-icon>' : '';
        this.shadowRoot.innerHTML = `
            <style>
                ${BUTTON}
                :host { display: block; width: var(--w); }
                button { width: 100%; display: flex; flex-direction: column; align-items: center; line-height: 13px; padding-top: 2px; white-space: nowrap; }
                ol-icon { margin-bottom: 4px; }
                span { display: flex; align-items: center; gap: 3px; height: 13px; }
                span ol-icon { margin: 0; }
            </style>
            <button>
                <ol-icon name="${this.getAttribute('icon')}"></ol-icon>
                <span>${this.getAttribute('text')}</span>
                <span>${more}${arrow}</span>
            </button>
        `;
    }
}

class SmallButton extends HTMLElement {
    constructor() {
        super();
        this.attachShadow({ mode: 'open' });
    }

    connectedCallback() {
        this.shadowRoot.innerHTML = `
            <style>
                ${BUTTON}
                :host { display: block; }
                :host([disabled]) { color: #9a9a9a; }
                button { display: flex; align-items: center; gap: 4px; height: 22px; padding: 0 3px; white-space: nowrap; }
            </style>
            <button>
                <ol-icon name="${this.getAttribute('icon')}"></ol-icon>
                ${this.getAttribute('text')}
                ${this.hasAttribute('arrow') ? '<ol-icon name="caret"></ol-icon>' : ''}
            </button>
        `;
    }
}

class ToolButton extends HTMLElement {
    constructor() {
        super();
        this.attachShadow({ mode: 'open' });
    }

    connectedCallback() {
        this.shadowRoot.innerHTML = `
            <style>
                ${BUTTON}
                :host { display: block; }
                button { min-width: 23px; height: 22px; padding: 0 3px; display: flex; align-items: center; justify-content: center; gap: 4px; box-sizing: border-box; }
                :host([pressed]) button { border: 1px solid #c29b29; border-radius: 3px; padding: 0 2px; background: linear-gradient(#f8c85c, #fde182); }
            </style>
            <button aria-label="${this.getAttribute('label')}">
                <ol-icon name="${this.getAttribute('icon')}"></ol-icon>
                ${this.hasAttribute('arrow') ? '<ol-icon name="caret"></ol-icon>' : ''}
            </button>
        `;
    }
}

class ToolSeparator extends HTMLElement {
    constructor() {
        super();
        this.attachShadow({ mode: 'open' });
        this.shadowRoot.innerHTML = '<style>:host { width: 1px; height: 20px; margin: 0 4px; background: #cdd0d5; }</style>';
    }
}

class ComboBox extends HTMLElement {
    constructor() {
        super();
        this.attachShadow({ mode: 'open' });
    }

    connectedCallback() {
        this.shadowRoot.innerHTML = `
            <style>
                :host { display: grid; width: var(--w); height: 22px; box-sizing: border-box; border: 1px solid #c4c7cc; background: #fff; align-items: center; }
                select, ol-icon { grid-area: 1 / 1; }
                select { appearance: none; width: 100%; height: 20px; border: 0; background: none; font: inherit; color: #000; padding: 0 0 0 1px; min-width: 0; }
                ol-icon { justify-self: end; margin-right: 2px; pointer-events: none; }
            </style>
            <select aria-label="${this.getAttribute('label')}"><option>${this.getAttribute('value')}</option></select>
            <ol-icon name="caret"></ol-icon>
        `;
    }
}

class AddressForm extends HTMLElement {
    constructor() {
        super();
        this.attachShadow({ mode: 'open' });
    }

    connectedCallback() {
        this.shadowRoot.innerHTML = `
            <style>
                :host { display: grid; grid-template-columns: 49px 50px 1fr; grid-template-rows: repeat(3, 23px); column-gap: 9px; row-gap: 3px; padding: 13px 6px 3px; align-items: end; }
                button { font: inherit; color: inherit; margin: 0; padding: 0; height: 23px; border: 1px solid #b5b9bf; border-radius: 3px; background: linear-gradient(#fafbfc, #eef0f3); }
                .send { grid-row: 1 / 4; height: 75px; display: flex; flex-direction: column; align-items: center; justify-content: center; gap: 3px; padding: 2px 3px 0 0; }
                label { line-height: 22px; }
                input { width: 100%; height: 21px; box-sizing: border-box; margin: 0; padding: 0 3px; border: 1px solid #9a9da2; background: #fff; color: #000; font: 11px "DejaVu Sans Condensed", sans-serif; }
                .to { font-family: Roboto, sans-serif; text-decoration: underline; }
            </style>
            <button class="send"><ol-icon name="send"></ol-icon>Send</button>
            <button>To...</button>
            <input class="to" aria-label="To" value="${this.getAttribute('to')}">
            <button>Cc...</button>
            <input aria-label="Cc">
            <label for="subject">Subject:</label>
            <input id="subject" value="${this.getAttribute('subject')}">
        `;
    }
}

class MessageEditor extends HTMLElement {
    constructor() {
        super();
        this.attachShadow({ mode: 'open' });
        this.shadowRoot.innerHTML = `
            <style>
                ${BUTTON}
                :host { display: flex; margin: 0 6px 7px; border: 1px solid #9ea6b3; background: #fff; }
                .page { flex: 1; padding: 15px 10px 8px; }
                .scroll { width: 17px; display: flex; flex-direction: column; align-items: center; background: linear-gradient(90deg, #eee, #fff); }
                .split { align-self: stretch; height: 23px; display: flex; flex-direction: column; align-items: center; gap: 4px; padding-top: 2px; background: #dbe0e8; box-sizing: border-box; }
                .split i { width: 9px; height: 2px; background: #7d828b; }
                button { width: 15px; height: 17px; display: grid; place-items: center; border: 1px solid #b6b9be; border-radius: 2px; background: linear-gradient(90deg, #f8f8f9, #e4e5e8); box-sizing: border-box; }
                .thumb { width: 15px; height: 99px; box-sizing: border-box; display: grid; place-content: center; gap: 1px; border: 1px solid #b6b9be; border-radius: 2px; background: linear-gradient(90deg, #f8f8f9, #e4e5e8); }
                .thumb i { width: 8px; height: 1px; background: #8c9097; }
                .down { margin-top: auto; }
            </style>
            <div class="page"><slot></slot></div>
            <div class="scroll">
                <div class="split"><i></i><ol-icon name="page"></ol-icon></div>
                <button aria-label="Scroll up"><ol-icon name="arrowup"></ol-icon></button>
                <div class="thumb"><i></i><i></i><i></i><i></i></div>
                <button class="down" aria-label="Scroll down"><ol-icon name="arrowdown"></ol-icon></button>
            </div>
        `;
    }
}

class ParkStrip extends HTMLElement {
    constructor() {
        super();
        this.attachShadow({ mode: 'open' });
        const parks = [
            ['SHOREFIELD', 'Country Park'],
            ['OAKDENE', 'Forest Park'],
            ['SWANAGE', 'Coastal Park'],
            ['FOREST EDGE', 'Holiday Park'],
            ['MERLEY COURT', 'Holiday Park'],
            ['LYTTON LAWN', 'Touring Park']
        ];
        this.shadowRoot.innerHTML = `
            <style>
                :host { display: flex; margin-top: 4px; font: 8px/10px Lato, sans-serif; color: #222; text-align: center; }
                div { padding: 0 9px; border-right: 1px solid #c9b79b; }
                div:first-of-type { padding-left: 4px; }
                div:last-of-type { border: 0; }
                span { display: block; color: #ad9a80; }
                b { display: block; }
            </style>
            ${parks.map(([name, kind]) => `<div><span>${name}</span><b>${kind}</b></div>`).join('')}
        `;
    }
}

class PeoplePane extends HTMLElement {
    constructor() {
        super();
        this.attachShadow({ mode: 'open' });
        this.shadowRoot.innerHTML = `
            <style>
                ${BUTTON}
                :host { display: block; background: #f1f3f5; color: #000; font: 12px "DejaVu Sans Condensed", sans-serif; }
                .splitter { height: 3px; margin: 0 6px; border: 1px solid #9ea6b3; border-left-color: #c3c8d0; background: #dfe3e9; }
                .row { display: flex; align-items: center; height: 34px; padding: 0 10px 2px 19px; }
                .text { flex: 1; margin-left: 13px; }
                button { display: flex; margin-left: 16px; }
            </style>
            <div class="splitter"></div>
            <div class="row">
                <ol-icon name="info"></ol-icon>
                <span class="text"><slot></slot></span>
                <ol-icon name="person"></ol-icon>
                <button aria-label="Expand"><ol-icon name="chevron"></ol-icon></button>
            </div>
        `;
    }
}

class TaskBar extends HTMLElement {
    constructor() {
        super();
        this.attachShadow({ mode: 'open' });
    }

    connectedCallback() {
        this.shadowRoot.innerHTML = `
            <style>
                ${BUTTON}
                :host {
                    position: relative;
                    display: flex;
                    height: 40px;
                    box-sizing: border-box;
                    border-top: 1px solid #1d3a55;
                    box-shadow: inset 0 1px #8fc0e0;
                    background: linear-gradient(90deg, #1f6499, #2f7fb2 4%, #3a8fc0 12%, #56b0de 23%, #3f9fd6 30%, #3a94d0 38%, #2f86c8 45%, #2a7cc8 53%, #1f70b2 58%, #2b76be 61%, #1e68ae 68%, #1d5fa8 80%, #2464a6 88%, #204c7c 90%, #1b416d 95%, #15365f);
                    color: #fff;
                }
                .glow { position: absolute; inset: 0; width: 100%; height: 100%; }
                .apps { position: relative; display: flex; flex: 1; align-items: center; }
                .apps button { height: 38px; display: grid; place-items: center; box-sizing: border-box; }
                .start { width: 54px; }
                .ie { width: 68px; }
                .apps .open { width: 59px; margin-right: 3px; border: 1px solid #20496d; border-radius: 3px; box-shadow: inset 0 0 0 1px #ffffffaa; background: linear-gradient(135deg, #ffffff8c, #ffffff30 60%, #ffffff55); }
                .apps .multi { width: 50px; margin-right: 11px; box-shadow: inset 0 0 0 1px #ffffffaa, 4px 0 0 -1px #9fcbe4, 5px 0 0 -1px #20496d, 8px 0 0 -1px #7db8da, 9px 0 0 -1px #20496d; }
                .apps .active { background: linear-gradient(135deg, #fffffff0, #ffffff80 60%, #ffffffb0); }
                .tray { position: relative; display: flex; align-items: center; gap: 8px; }
                .tray button { display: flex; margin-right: 4px; }
                .clock { text-align: center; font-size: 12px; line-height: 16px; margin: 2px 3px 0 5px; }
                .tray .show { width: 12px; height: 38px; margin-right: 1px; border: 1px solid #6b89a8; background: linear-gradient(160deg, #6f8ba8, #24486f 50%, #1a3c63); box-sizing: border-box; }
            </style>
            <svg class="glow" viewBox="0 0 1920 40" preserveAspectRatio="none" aria-hidden="true">
                <path d="M60 40L110 0h50L100 40zM510 0h20l15 40h-25zM660 0h50l10 40h-45zM790 0h30l10 40h-35z" fill="#fff" opacity=".08"/>
                <path d="M420 6c80 14 200 22 300-4M550 40c20-16 40-28 65-40" fill="none" stroke="#a8dcf8" stroke-width="5" opacity=".25"/>
                <path d="M1300 0c20 10 44 26 56 40h22C1364 24 1346 10 1328 0z" fill="#b7dcfb" opacity=".4"/>
                <path d="M1306 0c20 12 40 26 54 40h13C1358 24 1340 10 1322 0z" fill="#b7dcfb" opacity=".7"/>
                <path d="M1225 0h88c16 12 30 26 40 40h-115z" fill="#5a9ddc" opacity=".25"/>
            </svg>
            <div class="apps">
                <button class="start" aria-label="Start"><ol-icon name="start"></ol-icon></button>
                <button class="ie" aria-label="Internet Explorer"><ol-icon name="ie"></ol-icon></button>
                <button class="open" aria-label="Explorer"><ol-icon name="explorer"></ol-icon></button>
                <button class="open multi active" aria-label="Outlook"><ol-icon name="outlook"></ol-icon></button>
                <button class="open" aria-label="Firefox"><ol-icon name="firefox"></ol-icon></button>
                <button class="open" aria-label="Grid"><ol-icon name="grid"></ol-icon></button>
                <button class="open multi" aria-label="Messenger"><ol-icon name="messenger"></ol-icon></button>
            </div>
            <div class="tray">
                <button aria-label="Hidden icons"><ol-icon name="tray"></ol-icon></button>
                <ol-icon name="trayflag"></ol-icon>
                <ol-icon name="status"></ol-icon>
                <ol-icon name="network"></ol-icon>
                <ol-icon name="sound"></ol-icon>
                <div class="clock">${this.getAttribute('time')}<br>${this.getAttribute('date')}</div>
                <button class="show" aria-label="Show desktop"></button>
            </div>
        `;
    }
}

customElements.define('ol-icon', OlIcon);
customElements.define('window-header', WindowHeader);
customElements.define('ribbon-group', RibbonGroup);
customElements.define('large-button', LargeButton);
customElements.define('small-button', SmallButton);
customElements.define('tool-button', ToolButton);
customElements.define('tool-separator', ToolSeparator);
customElements.define('combo-box', ComboBox);
customElements.define('address-form', AddressForm);
customElements.define('message-editor', MessageEditor);
customElements.define('park-strip', ParkStrip);
customElements.define('people-pane', PeoplePane);
customElements.define('task-bar', TaskBar);
</script>
</body>
</html>
